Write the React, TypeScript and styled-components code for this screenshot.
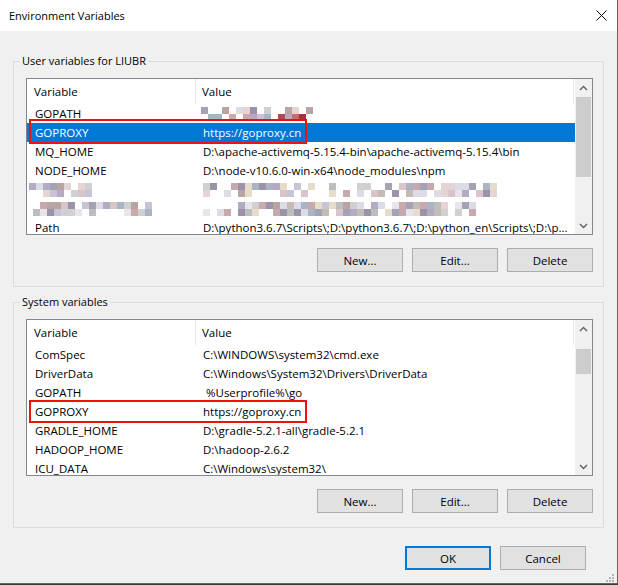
import React from "react";
import styled, { createGlobalStyle } from "styled-components";

const Global = createGlobalStyle`
  html, body { margin: 0; padding: 0; background: #3d3b30; }
  body { font-family: "Open Sans", "Noto Sans", sans-serif; font-size: 11px; color: #000; }
  #root { width: 618px; height: 585px; }
  * { box-sizing: border-box; }
`;

const Window = styled.div`
  width: 618px;
  height: 584px;
  border-right: 1px solid #66655c;
  border-bottom: 1px solid #66655c;
  background: #f0f0f0;
  display: flex;
  flex-direction: column;
  position: relative;
`;

const TitleBar = styled.div`
  height: 31px;
  flex-shrink: 0;
  background: #fff;
  display: flex;
  align-items: center;
  justify-content: space-between;
  padding: 0 10px 0 9px;
`;

const Title = styled.span`
  font-size: 11px;
  line-height: 16px;
  color: #000;
`;

const Content = styled.div`
  display: flex;
  flex-direction: column;
  padding: 22px 13px 0 13px;
`;

const Group = styled.fieldset<{ $gap?: number }>`
  margin: ${(p) => p.$gap ?? 0}px 0 0 0;
  padding: 9px 10px 14px 12px;
  border: 1px solid #dcdcdc;
  min-width: 0;
`;

const Legend = styled.legend`
  padding: 0 2px;
  margin-left: -6px;
  line-height: 16px;
  font-size: 11px;
`;

const ListBox = styled.div`
  height: 157px;
  border: 1px solid #828790;
  background: #fff;
  display: flex;
  overflow: hidden;
  font-size: 11.5px;
`;

const TableArea = styled.div`
  flex: 1;
  min-width: 0;
  display: flex;
  flex-direction: column;
  overflow: hidden;
`;

const HeaderRow = styled.div`
  height: 25px;
  flex-shrink: 0;
  display: grid;
  grid-template-columns: 169px 1fr;
  margin-right: 1px;
`;

const HeaderCell = styled.div<{ $first?: boolean }>`
  display: flex;
  align-items: center;
  padding-left: ${(p) => (p.$first ? 7 : 6)}px;
  border-right: 1px solid #e5e5e5;
  white-space: nowrap;
`;

const Row = styled.div<{ $selected?: boolean }>`
  position: relative;
  height: 19px;
  flex-shrink: 0;
  display: grid;
  grid-template-columns: 169px 1fr;
  background: ${(p) => (p.$selected ? "#0078d7" : "transparent")};
  color: ${(p) => (p.$selected ? "#fff" : "#000")};
`;

const Cell = styled.div<{ $first?: boolean }>`
  display: flex;
  align-items: center;
  padding-left: ${(p) => (p.$first ? 8 : 7)}px;
  white-space: nowrap;
  overflow: hidden;
  line-height: 19px;
`;

const Mark = styled.div<{ $top: number; $height: number }>`
  position: absolute;
  left: 2px;
  top: ${(p) => p.$top}px;
  width: 278px;
  height: ${(p) => p.$height}px;
  border: 2px solid #ee1111;
  z-index: 2;
  pointer-events: none;
`;

const Mosaic = styled.div<{ $cols: number; $shift: number }>`
  display: grid;
  grid-template-columns: repeat(${(p) => p.$cols}, 7px);
  grid-auto-rows: 7px;
  margin-left: ${(p) => p.$shift}px;
`;

const Scrollbar = styled.div`
  width: 17px;
  flex-shrink: 0;
  background: #f0f0f0;
  display: flex;
  flex-direction: column;
`;

const ArrowBtn = styled.div`
  height: 17px;
  flex-shrink: 0;
  display: flex;
  align-items: center;
  justify-content: center;
`;

const Track = styled.div`
  flex: 1;
  display: flex;
  flex-direction: column;
`;

const Thumb = styled.div<{ $top: number; $height: number }>`
  margin: ${(p) => p.$top}px 1px 0 1px;
  height: ${(p) => p.$height}px;
  background: #cdcdcd;
`;

const ButtonRow = styled.div`
  display: flex;
  justify-content: flex-end;
  gap: 9px;
  margin-top: 13px;
`;

const Button = styled.button<{ $default?: boolean }>`
  width: 86px;
  height: 24px;
  padding: 0;
  margin: 0;
  font-family: "Open Sans", "Noto Sans", sans-serif;
  font-size: 11.5px;
  color: #000;
  background: #e1e1e1;
  border: ${(p) => (p.$default ? "2px solid #0078d7" : "1px solid #adadad")};
  border-radius: 0;
`;

const Footer = styled.div`
  display: flex;
  justify-content: flex-end;
  gap: 9px;
  margin-top: 18px;
  padding-right: 31px;
`;

const Grip = styled.svg`
  position: absolute;
  right: 3px;
  bottom: 1px;
`;

const PALETTE = [
  "#c9c3d6", "#b3aac4", "#bdbdbd", "#d9c4c8", "#c7a9ae", "#e6dcc8",
  "#a3a3b5", "#d0d0d0", "#e8e4ec", "#9a93aa", "#b9a4a4", "#dcdce6",
  "#c4bcb4", "#aab4c4", "#e4d4d4",
];

function mosaicColors(seed: number, count: number, blank: number, accents?: Record<number, string>): string[] {
  let s = seed;
  const out: string[] = [];
  for (let i = 0; i < count; i++) {
    s = (s * 1103515245 + 12345) & 0x7fffffff;
    const r = ((s >> 8) % 1000) / 1000;
    if (accents && accents[i]) out.push(accents[i]);
    else if (r < blank) out.push("transparent");
    else out.push(PALETTE[(s >> 5) % PALETTE.length]);
  }
  return out;
}

type Blur = { seed: number; cols: number; blank?: number; shift?: number; accents?: Record<number, string> };

const Blurred: React.FC<{ b: Blur }> = ({ b }) => {
  const colors = mosaicColors(b.seed, b.cols * 2, b.blank ?? 0.25, b.accents);
  return (
    <Mosaic $cols={b.cols} $shift={b.shift ?? 0}>
      {colors.map((c, i) => (
        <span key={i} style={{ background: c }} />
      ))}
    </Mosaic>
  );
};

type VarRow = {
  name?: string;
  value?: string;
  nameBlur?: Blur;
  valueBlur?: Blur;
  selected?: boolean;
  mark?: { top: number; height: number };
};

const UpIcon = () => (
  <svg width="9" height="6" viewBox="0 0 9 6">
    <polyline points="1,5 4.5,1.5 8,5" fill="none" stroke="#606060" strokeWidth="1.4" />
  </svg>
);

const DownIcon = () => (
  <svg width="9" height="6" viewBox="0 0 9 6">
    <polyline points="1,1 4.5,4.5 8,1" fill="none" stroke="#606060" strokeWidth="1.4" />
  </svg>
);

const VarList: React.FC<{ rows: VarRow[]; thumbTop: number; thumbHeight: number }> = ({ rows, thumbTop, thumbHeight }) => (
  <ListBox>
    <TableArea>
      <HeaderRow>
        <HeaderCell $first>Variable</HeaderCell>
        <HeaderCell>Value</HeaderCell>
      </HeaderRow>
      {rows.map((r, i) => (
        <Row key={i} $selected={r.selected}>
          <Cell $first>{r.nameBlur ? <Blurred b={r.nameBlur} /> : r.name}</Cell>
          <Cell>{r.valueBlur ? <Blurred b={r.valueBlur} /> : r.value}</Cell>
          {r.mark && <Mark $top={r.mark.top} $height={r.mark.height} />}
        </Row>
      ))}
    </TableArea>
    <Scrollbar>
      <ArrowBtn>
        <UpIcon />
      </ArrowBtn>
      <Track>
        <Thumb $top={thumbTop} $height={thumbHeight} />
      </Track>
      <ArrowBtn>
        <DownIcon />
      </ArrowBtn>
    </Scrollbar>
  </ListBox>
);

const userRows: VarRow[] = [
  { name: "GOPATH", valueBlur: { seed: 11, cols: 16, blank: 0.3, shift: -2, accents: { 27: "#b04a52", 29: "#c86b6b", 30: "#a8323c" } } },
  { name: "GOPROXY", value: "https://goproxy.cn", selected: true, mark: { top: -4, height: 25 } },
  { name: "MQ_HOME", value: "D:\\apache-activemq-5.15.4-bin\\apache-activemq-5.15.4\\bin" },
  { name: "NODE_HOME", value: "D:\\node-v10.6.0-win-x64\\node_modules\\npm" },
  { nameBlur: { seed: 37, cols: 9, blank: 0.2, shift: -6 }, valueBlur: { seed: 53, cols: 42, blank: 0.3 } },
  { nameBlur: { seed: 71, cols: 17, blank: 0.3, shift: -2 }, valueBlur: { seed: 97, cols: 39, blank: 0.25 } },
  { name: "Path", value: "D:\\python3.6.7\\Scripts\\;D:\\python3.6.7\\;D:\\python_en\\Scripts\\;D:\\p..." },
];

const systemRows: VarRow[] = [
  { name: "ComSpec", value: "C:\\WINDOWS\\system32\\cmd.exe" },
  { name: "DriverData", value: "C:\\Windows\\System32\\Drivers\\DriverData" },
  { name: "GOPATH", value: "\u00a0%Userprofile%\\go" },
  { name: "GOPROXY", value: "https://goproxy.cn", mark: { top: -2, height: 23 } },
  { name: "GRADLE_HOME", value: "D:\\gradle-5.2.1-all\\gradle-5.2.1" },
  { name: "HADOOP_HOME", value: "D:\\hadoop-2.6.2" },
  { name: "ICU_DATA", value: "C:\\Windows\\system32\\" },
];

export default function App() {
  return (
    <>
      <Global />
      <Window>
        <TitleBar>
          <Title>Environment Variables</Title>
          <svg width="11" height="11" viewBox="0 0 11 11">
            <path d="M0.5 0.5 L10.5 10.5 M10.5 0.5 L0.5 10.5" stroke="#000" strokeWidth="1" />
          </svg>
        </TitleBar>
        <Content>
          <Group>
            <Legend>User variables for LIUBR</Legend>
            <VarList rows={userRows} thumbTop={1} thumbHeight={80} />
            <ButtonRow>
              <Button>New...</Button>
              <Button>Edit...</Button>
              <Button>Delete</Button>
            </ButtonRow>
          </Group>
          <Group $gap={7}>
            <Legend>System variables</Legend>
            <VarList rows={systemRows} thumbTop={12} thumbHeight={25} />
            <ButtonRow>
              <Button>New...</Button>
              <Button>Edit...</Button>
              <Button>Delete</Button>
            </ButtonRow>
          </Group>
        </Content>
        <Footer>
          <Button $default>OK</Button>
          <Button>Cancel</Button>
        </Footer>
        <Grip width="8" height="8" viewBox="0 0 8 8">
          <rect x="6" y="0" width="2" height="2" fill="#b5b5b5" />
          <rect x="3" y="3" width="2" height="2" fill="#b5b5b5" />
          <rect x="6" y="3" width="2" height="2" fill="#b5b5b5" />
          <rect x="0" y="6" width="2" height="2" fill="#b5b5b5" />
          <rect x="3" y="6" width="2" height="2" fill="#b5b5b5" />
          <rect x="6" y="6" width="2" height="2" fill="#b5b5b5" />
        </Grip>
      </Window>
    </>
  );
}
